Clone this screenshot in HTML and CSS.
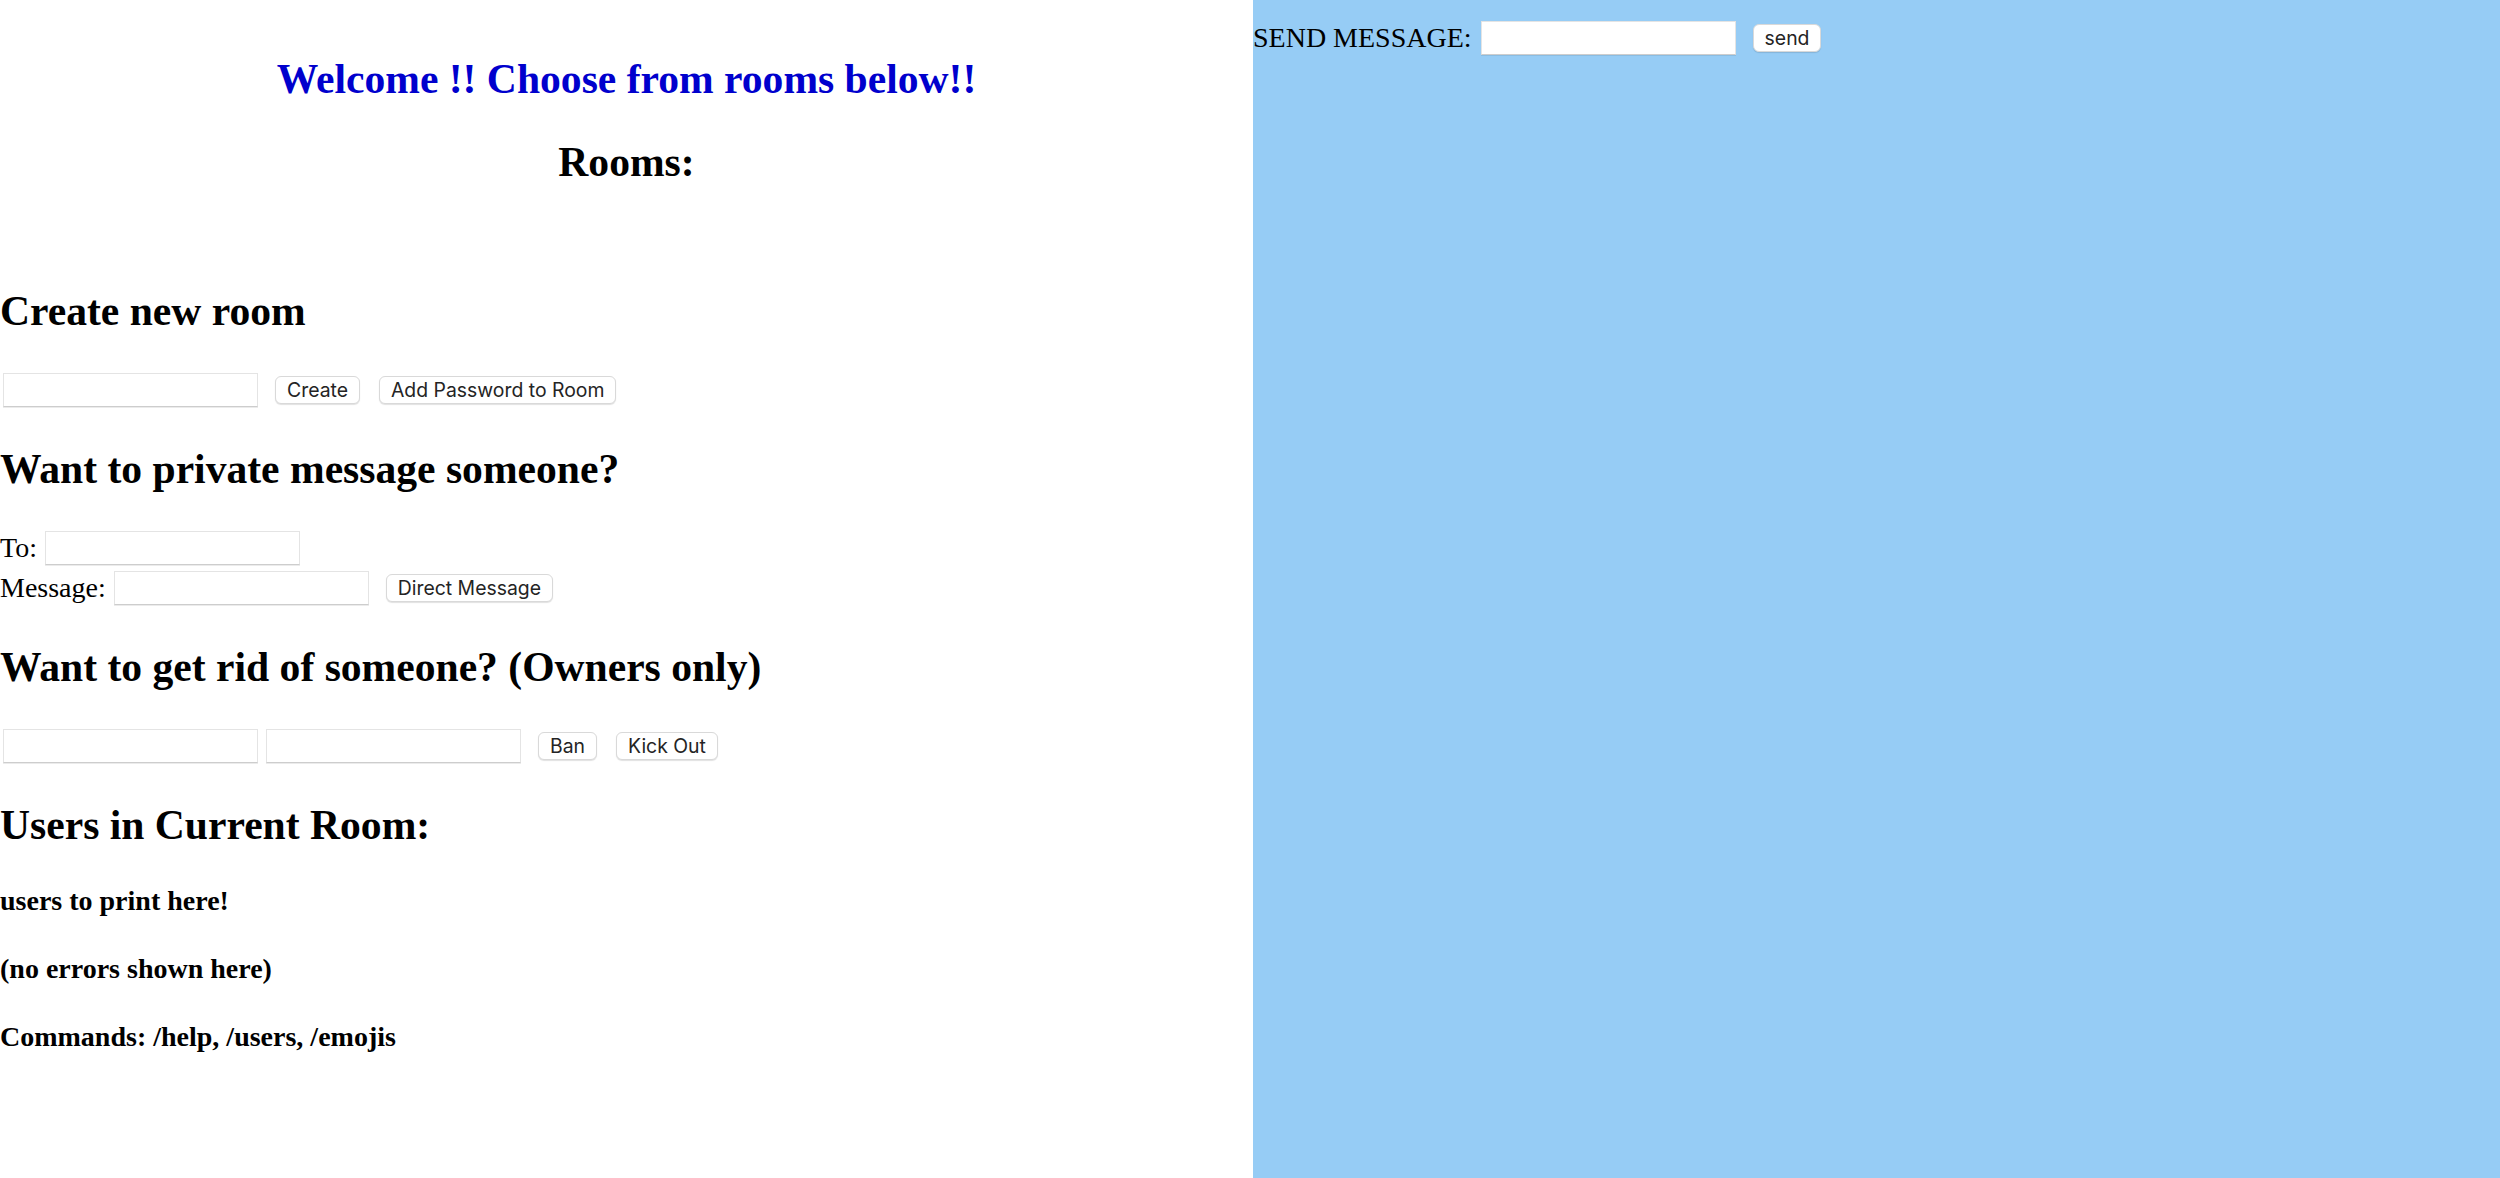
FILE: index.html
```html
<!DOCTYPE html>
<html lang="en">
<head>
<meta charset="utf-8">
<title>Chat Rooms</title>
<link rel="stylesheet" href="styles.css">
</head>
<body>
<div class="app">
  <main class="lobby">
    <h2 class="title welcome">Welcome !! Choose from rooms below!!</h2>
    <h2 class="title">Rooms:</h2>
    <div class="rooms"></div>

    <h2>Create new room</h2>
    <div class="row">
      <input class="field" type="text">
      <button class="btn">Create</button>
      <button class="btn">Add Password to Room</button>
    </div>

    <h2>Want to private message someone?</h2>
    <div class="row">
      <label class="label">To:</label>
      <input class="field" type="text">
    </div>
    <div class="row">
      <label class="label">Message:</label>
      <input class="field" type="text">
      <button class="btn">Direct Message</button>
    </div>

    <h2>Want to get rid of someone? (Owners only)</h2>
    <div class="row">
      <input class="field" type="text">
      <input class="field" type="text">
      <button class="btn">Ban</button>
      <button class="btn">Kick Out</button>
    </div>

    <h2>Users in Current Room:</h2>
    <h4>users to print here!</h4>
    <h4>(no errors shown here)</h4>
    <h4>Commands: /help, /users, /emojis</h4>
  </main>

  <section class="chat">
    <div class="row">
      <label class="label send-label">SEND MESSAGE:</label>
      <input class="field" type="text">
      <button class="btn">send</button>
    </div>
  </section>
</div>
</body>
</html>
```

FILE: styles.css
```css
html, body {
  margin: 0;
  padding: 0;
  background: #ffffff;
}

body {
  font-family: "Liberation Serif", "Times New Roman", serif;
  font-size: 28px;
  color: #000000;
}

.app {
  display: grid;
  grid-template-columns: 1253px 1fr;
  height: 100vh;
  overflow: hidden;
}

.lobby {
  padding-top: 20px;
}

.lobby h2 {
  font-size: 41.6px;
  line-height: 48px;
  font-weight: bold;
  margin: 35px 0;
}

.title {
  text-align: center;
}

.welcome {
  color: #0000cd;
}

.rooms {
  height: 31px;
}

.lobby h4 {
  font-size: 28px;
  line-height: 32px;
  font-weight: bold;
  margin: 36px 0;
}

.row {
  display: flex;
  align-items: center;
  column-gap: 8px;
  height: 40px;
}

.label {
  font-size: 28px;
  line-height: 32px;
}

.field {
  box-sizing: border-box;
  width: 255px;
  height: 34px;
  margin: 0;
  padding: 0 6px;
  border: 1px solid #e4e4e4;
  border-bottom-color: #cdcdcd;
  box-shadow: 0 1px 0 rgba(0, 0, 0, 0.08);
  background: #ffffff;
  font-family: "Inter", "Liberation Sans", sans-serif;
  font-size: 18px;
  outline: none;
}

.row > .field:first-child {
  margin-left: 3px;
}

.btn {
  box-sizing: border-box;
  height: 28px;
  margin: 0 0 0 9px;
  padding: 0 11px;
  border: 1px solid #d9d9d9;
  border-radius: 6px;
  background: #ffffff;
  box-shadow: 0 1px 1px rgba(0, 0, 0, 0.12);
  font-family: "Inter", "Liberation Sans", sans-serif;
  font-size: 19.4px;
  line-height: 26px;
  color: #242424;
  white-space: nowrap;
}

.btn + .btn {
  margin-left: 11px;
}

.chat {
  background: #96ccf5;
  padding-top: 18px;
}

.send-label {
  margin-right: 1px;
}
```
